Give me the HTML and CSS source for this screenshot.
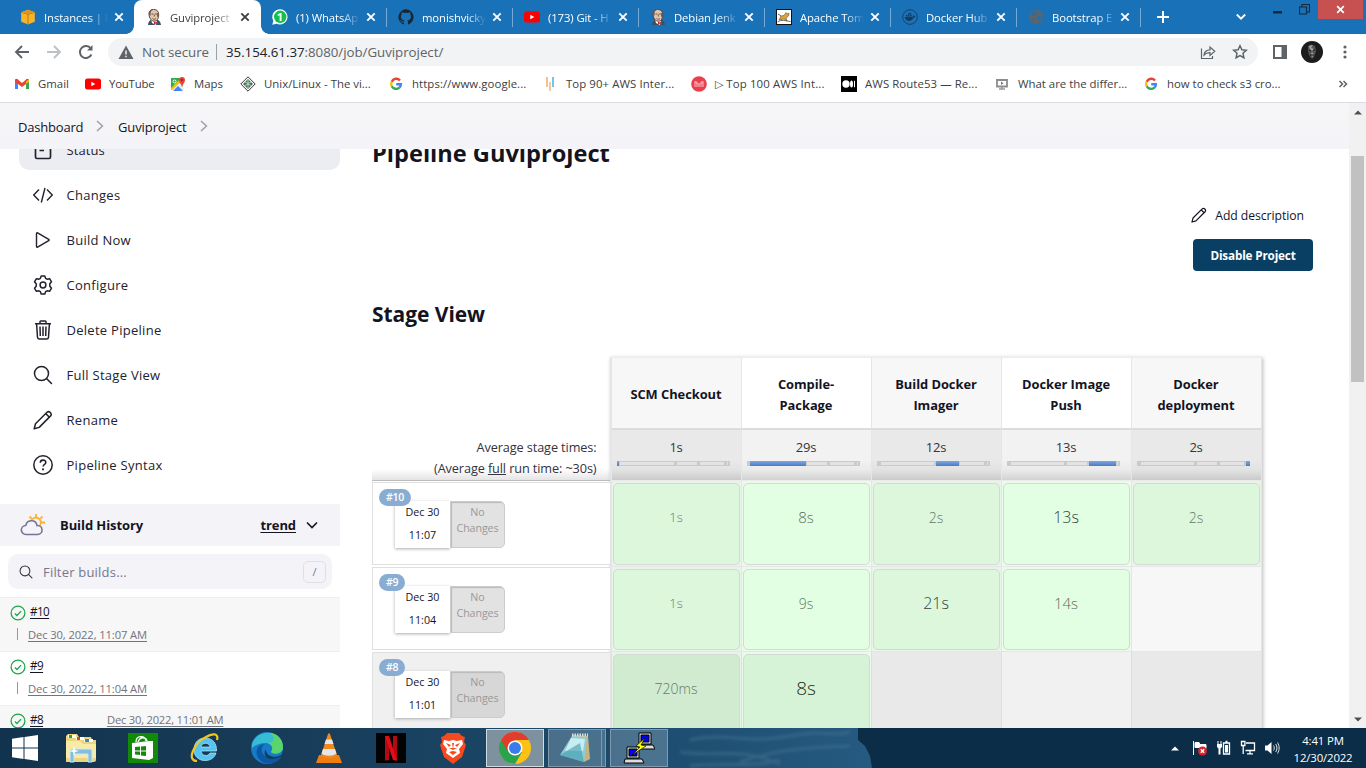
FILE: index.html
```html
<!DOCTYPE html>
<html lang="en">
<head>
<meta charset="utf-8">
<title>Guviproject [Jenkins]</title>
<link rel="stylesheet" href="styles.css">
</head>
<body>
<svg class="defs" aria-hidden="true">
  <symbol id="close" viewBox="0 0 10 10"><path d="M1.3 1.3l7.4 7.4M8.7 1.3L1.3 8.7" stroke="currentColor" stroke-width="1.9"/></symbol>
  <symbol id="jenkins" viewBox="0 0 16 16"><path d="M2 16c.3-3 1.500-4.500 3.500-5.500h5c2.500.6 4 2 4.500 5.500z" fill="#3d5064"/><path d="M5 10l1 4 4 2 1-5z" fill="#fff"/><path d="M3 5.500C2.600 2 5 .4 7.500.4c3.500 0 5.300 2 5.200 5.400-.1 3.800-1.700 6.600-4.500 6.400C5.200 12 3.300 9 3 5.500z" fill="#e3c6aa" stroke="#4b3b38" stroke-width=".9"/><path d="M3 6C2.300 2 5 .2 7.500.3L4.800 2.500 4.500 7zM12.500 4l-.2 5-1.300-2 .2-3z" fill="#71584f"/><path d="M5.500 5h2M9 5h2M6.500 9.500c1.300 1 2.500.9 3.500 0M8.300 5.500v2" stroke="#4b3b38" stroke-width=".8" fill="none"/><path d="M8 12.500l2 1 2-1v3l-2-1-2 1z" fill="#d4202f"/></symbol>
  <symbol id="youtube" viewBox="0 0 16 16"><rect x="0" y="2.500" width="16" height="11" rx="2.500" fill="#f00"/><path d="M6.300 5.700v4.600l4-2.300z" fill="#fff"/></symbol>
  <symbol id="google" viewBox="0 0 16 16"><g fill="none" stroke-width="2.400"><path d="M12 4.500A4.900 4.900 0 0 0 3.700 5.700" stroke="#ea4335"/><path d="M3.700 5.700a4.900 4.900 0 0 0 0 4.600" stroke="#fbbc05"/><path d="M3.700 10.300a4.900 4.900 0 0 0 7.600 1.300" stroke="#34a853"/><path d="M11.300 11.600a4.700 4.700 0 0 0 1.600-3.400H8.200" stroke="#4285f4"/></g></symbol>
  <symbol id="pencil" viewBox="0 0 20 20"><g fill="none" stroke="currentColor" stroke-width="1.500" stroke-linejoin="round"><path d="M1.200 18.800l1.300-5L14 2.300c2-2 5.500 1.400 3.600 3.600L6.200 17.400z"/><path d="M12.800 3.600l3.600 3.600"/></g></symbol>
  <symbol id="search" viewBox="0 0 20 20"><circle cx="8.500" cy="8.500" r="7" fill="none" stroke="currentColor" stroke-width="1.500"/><path d="M13.500 13.500l5 5" stroke="currentColor" stroke-width="1.500" stroke-linecap="round"/></symbol>
  <symbol id="chev" viewBox="0 0 10 14"><path d="M2 2l5.500 5L2 12" fill="none" stroke="currentColor" stroke-width="1.400"/></symbol>
  <symbol id="ok" viewBox="0 0 16 16"><circle cx="8" cy="8" r="6.900" fill="none" stroke="#1ea64b" stroke-width="1.300"/><path d="M4.900 8.500l2 2 4.200-4.400" fill="none" stroke="#1ea64b" stroke-width="1.300"/></symbol>
</svg>

<header class="tabstrip">
  <div class="tab"><svg class="fav" viewBox="0 0 16 16"><path d="M8 .8l6.800 2.400v9.600L8 15.400 1.200 12.800V3.200z" fill="#f5b42a"/><path d="M1.200 3.200L8 5.300l6.800-2.100M8 5.300v10" stroke="#a96b10" stroke-width=".8" fill="none"/><path d="M1.200 3.200L8 .8l6.800 2.400L8 5.300z" fill="#e0941d"/></svg><span>Instances | E</span><svg class="x"><use href="#close"/></svg></div>
  <div class="tab active"><svg class="fav"><use href="#jenkins"/></svg><span>Guviproject</span><svg class="x"><use href="#close"/></svg></div>
  <div class="tab sep"><svg class="fav" viewBox="0 0 16 16"><path d="M.3 15.700l1-4A7.600 7.600 0 1 1 4.500 14.700z" fill="#fff"/><circle cx="8.200" cy="7.800" r="6.200" fill="#12c04d"/><text x="8" y="12" text-anchor="middle" font-size="11" font-weight="700" fill="#fff">1</text></svg><span>(1) WhatsAp</span><svg class="x"><use href="#close"/></svg></div>
  <div class="tab sep"><svg class="fav" viewBox="0 0 16 16"><path d="M8 .3a7.800 7.800 0 0 0-2.500 15.100c.4 0 .5-.2.500-.4v-1.500c-2.200.5-2.700-1-2.700-1-.4-.9-.9-1.100-.9-1.100-.7-.5.100-.5.100-.5.800 0 1.200.8 1.200.8.700 1.200 1.900.9 2.300.7.100-.5.300-.9.500-1.100-1.700-.2-3.600-.9-3.600-3.900 0-.9.300-1.600.8-2.100-.1-.2-.4-1 .1-2.100 0 0 .7-.2 2.100.8a7.600 7.600 0 0 1 4 0c1.500-1 2.200-.8 2.200-.8.400 1.100.1 1.900.1 2.100.5.500.8 1.200.8 2.100 0 3-1.900 3.700-3.600 3.900.300.3.500.8.500 1.500V15c0 .2.100.5.600.4A7.800 7.800 0 0 0 8 .3z" fill="#1b2733"/></svg><span>monishvicky</span><svg class="x"><use href="#close"/></svg></div>
  <div class="tab sep"><svg class="fav"><use href="#youtube"/></svg><span>(173) Git - H</span><svg class="x"><use href="#close"/></svg></div>
  <div class="tab sep"><svg class="fav"><use href="#jenkins"/></svg><span>Debian Jenk</span><svg class="x"><use href="#close"/></svg></div>
  <div class="tab sep"><svg class="fav" viewBox="0 0 16 16"><rect x=".5" y=".5" width="15" height="15" fill="#fff" stroke="#111"/><path d="M3 11l2-4 3-.5 2-3 1 1.500 2-1-.5 3L10 9l1 3-3-2z" fill="#d5a546" stroke="#6e5218" stroke-width=".6"/><path d="M1.500 13c4-3 8-1 13-.5M2 5l3 2" stroke="#444" fill="none" stroke-width=".8"/></svg><span>Apache Tom</span><svg class="x"><use href="#close"/></svg></div>
  <div class="tab sep"><svg class="fav" viewBox="0 0 16 16"><circle cx="8" cy="8" r="7.300" fill="none" stroke="#1b4266" stroke-width="1"/><path d="M2.800 8h7.700c.6-.6.5-1.400 1-1.900.7.400.8.900.8 1.200.5-.1.900 0 1.200.2-.4.900-1.200 1.100-1.900 1.100-1.500 4.300-7.800 5-8.800-.6zM4 6h1.500v1.500H4zM6 6h1.500v1.500H6zM8 6h1.500v1.500H8zM6 4.200h3.500v1.400H6z" fill="#173b5c"/></svg><span>Docker Hub</span><svg class="x"><use href="#close"/></svg></div>
  <div class="tab sep last"><svg class="fav" viewBox="0 0 16 16"><circle cx="8" cy="8" r="7.200" fill="#5d646b"/><path d="M5 3l3-.5.5 1.500-2 1 .5 1.500-2 .5-1.500-1zM9.500 7.500l3-1 1 2-1.500 3-2-1zM4 9.500l2.500 1-.5 2.500-1.500-1z" fill="#1971b8"/></svg><span>Bootstrap E</span><svg class="x"><use href="#close"/></svg></div>
  <svg class="plus" viewBox="0 0 12 12"><path d="M6 0v12M0 6h12" stroke="#fff" stroke-width="2"/></svg>
  <svg class="tabmenu" viewBox="0 0 10 8"><path d="M.8 1.500L5 5.700l4.200-4.200" fill="none" stroke="#fff" stroke-width="1.800"/></svg>
  <div class="winctl">
    <svg width="9" height="3"><rect width="9" height="2.500" fill="#15293b"/></svg>
    <svg width="11" height="11" viewBox="0 0 11 11"><path d="M.5 3h7v7h-7zM3 3V.5h7.500V8H8" fill="none" stroke="#15293b" stroke-width="1.100"/></svg>
    <div class="winclose"><svg width="9" height="9"><use href="#close"/></svg></div>
  </div>
</header>

<div class="toolbar">
  <div class="nav">
    <svg viewBox="0 0 16 16"><path d="M15 8H2M8 2L2 8l6 6" fill="none" stroke="#5f6368" stroke-width="1.900"/></svg>
    <svg viewBox="0 0 16 16"><path d="M1 8h13M8 2l6 6-6 6" fill="none" stroke="#bdc1c6" stroke-width="1.900"/></svg>
    <svg viewBox="0 0 16 16"><path d="M13.400 10.500a6 6 0 1 1-.6-6" fill="none" stroke="#5f6368" stroke-width="2"/><path d="M14.500 1v5.500H9z" fill="#5f6368"/></svg>
  </div>
  <div class="omnibox">
    <svg class="warn" viewBox="0 0 16 14"><path d="M8 .5L15.500 14H.5z" fill="#5f6368"/><path d="M8 5.500v4M8 10.800v1.500" stroke="#f1f3f4" stroke-width="1.500"/></svg>
    <span class="insecure">Not secure</span><i class="bar"></i>
    <span class="url"><b>35.154.61.37</b>:8080/job/Guviproject/</span>
    <svg class="share" viewBox="0 0 16 16"><path d="M1.500 4.500v10h11v-2.500M4 11c.4-3.500 2.600-5 6-5.100V3l4.800 4.300L10 11.500V8.700C7.500 8.600 5.500 9.300 4 11z" fill="none" stroke="#5f6368" stroke-width="1.200"/></svg>
    <svg class="star" viewBox="0 0 16 16"><path d="M8 1.800l1.900 4 4.400.5-3.300 3 .9 4.400L8 11.500l-3.900 2.200.9-4.400-3.300-3 4.400-.5z" fill="none" stroke="#5f6368" stroke-width="1.500"/></svg>
  </div>
  <svg class="panel" viewBox="0 0 14 14"><path d="M1 1h12v12H1z" fill="none" stroke="#5f6368" stroke-width="2"/><path d="M8.500 1H13v12H8.500z" fill="#5f6368"/></svg>
  <svg class="avatar" viewBox="0 0 22 22"><circle cx="11" cy="11" r="11" fill="#1c1c1c"/><path d="M7 5l3-1.500L14 5l1 5-2 6-2 2-2.500-3L7 10z" fill="#555"/><path d="M8 5l4-1-2 3 3 1-2 2-2-2zM10 12l2-.5.5 3-1.500 2z" fill="#a5a5a5"/><path d="M8 9l2 1M12 9.500l2-1M9 14h4" stroke="#111"/></svg>
  <svg class="dots" viewBox="0 0 4 14"><g fill="#5f6368"><circle cx="2" cy="2" r="1.600"/><circle cx="2" cy="7" r="1.600"/><circle cx="2" cy="12" r="1.600"/></g></svg>
</div>

<nav class="bookmarks">
  <a class="b1"><svg viewBox="0 0 16 16"><path d="M1 3.500h3V13H1z" fill="#4285f4"/><path d="M12 3.500h3V13h-3z" fill="#34a853"/><path d="M1 3.500l2-.7L8 7l5-4.200 2 .7v2.200l-7 5.400-7-5.400z" fill="#ea4335"/><path d="M12 5.500l3-2.300v2.600L12 8z" fill="#fbbc04"/></svg><span>Gmail</span></a>
  <a class="b2"><svg><use href="#youtube"/></svg><span>YouTube</span></a>
  <a class="b3"><svg viewBox="0 0 16 16"><path d="M1 2h12v12H1z" fill="#34a853"/><path d="M1 14L11 5l3 9z" fill="#e8eaed"/><path d="M3 15l5-5 5 5z" fill="#4285f4"/><path d="M1 12l9-9 1.500 2L2 14H1z" fill="#fbbc04"/><circle cx="4.500" cy="5.500" r="1.500" fill="none" stroke="#fff"/><path d="M12 11C11.500 8 9 7 9 4a3 3 0 0 1 6 0c0 3-2.500 4-3 7z" fill="#ea4335"/><circle cx="12" cy="4" r="1.100" fill="#8d1f17"/></svg><span>Maps</span></a>
  <a class="b4"><svg viewBox="0 0 16 16"><path d="M8 .8L15.200 8 8 15.200.8 8z" fill="#fff" stroke="#333"/><path d="M8 3l5 5-5 5-5-5z" fill="#56635b"/><path d="M5 6l3 1.500L11 6M5 9.500L8 8l3 1.500M8 4v8" stroke="#a4e5bd" fill="none"/></svg><span>Unix/Linux - The vi...</span></a>
  <a class="b5"><svg><use href="#google"/></svg><span>https://www.google...</span></a>
  <a class="b6"><svg viewBox="0 0 16 16"><path d="M5 1v10" stroke="#f5ad62" stroke-width="1.500"/><path d="M8 6v9" stroke="#f6c99c" stroke-width="2"/><path d="M11 1v10" stroke="#3cb6e3" stroke-width="1.500"/></svg><span>Top 90+ AWS Inter...</span></a>
  <a class="b7"><svg viewBox="0 0 16 16"><circle cx="8" cy="8" r="7.800" fill="#e8404f"/><path d="M4 11V5.500l2 2.500V11m2-3v3m2 0V8l2-2.500V11M4.500 5L8 8.500 11.500 5" stroke="#ffc1c5" fill="none"/></svg><span>▷ Top 100 AWS Int...</span></a>
  <a class="b8"><svg viewBox="0 0 16 16"><path d="M0 0h16v16H0z"/><circle cx="5" cy="8" r="3.700" fill="#fff"/><ellipse cx="10.500" cy="8" rx="1.500" ry="3.500" fill="#fff"/><path d="M13.500 4.800v6.400" stroke="#fff"/></svg><span>AWS Route53 — Re...</span></a>
  <a class="b9"><svg viewBox="0 0 16 16"><path d="M3 4h10v6.500H3z" fill="#fff" stroke="#8c8c8c" stroke-width="1.800"/><path d="M7 5.500v3.500l2.500-1.700z" fill="#777"/><path d="M5 13h6M8 11v2" stroke="#999" stroke-width="1.500"/></svg><span>What are the differ...</span></a>
  <a class="b10"><svg><use href="#google"/></svg><span>how to check s3 cro...</span></a>
  <svg class="more" viewBox="0 0 10 8"><path d="M1.500 1l3 3-3 3M5.500 1l3 3-3 3" fill="none" stroke="#5f6368" stroke-width="1.500"/></svg>
</nav>

<div class="page">
  <div class="view">
    <div class="crumbs"><span class="c1">Dashboard</span><svg><use href="#chev"/></svg><span class="c2">Guviproject</span><svg><use href="#chev"/></svg></div>
    <div class="clip"><div class="cols">
      <aside class="side">
        <a class="task on"><svg viewBox="0 0 20 20"><path d="M2.500 2h15v15c0 1-.6 1.500-1.500 1.500H4c-.900 0-1.500-.5-1.500-1.500zM6.500 10.500H11M6.500 6H13" fill="none" stroke="currentColor" stroke-width="1.700"/></svg>Status</a>
        <a class="task"><svg viewBox="0 0 20 20"><path d="M6 4.500L.7 10 6 15.500M14 4.500l5.300 5.500-5.300 5.500M12 3L8.300 17.500" fill="none" stroke="currentColor" stroke-width="1.400"/></svg>Changes</a>
        <a class="task"><svg viewBox="0 0 20 20"><path d="M3.500 3.400v13.200c0 .6.600.9 1.100.6L15.700 10.600c.5-.3.500-.9 0-1.200L4.600 2.800c-.5-.3-1.100 0-1.100.6z" fill="none" stroke="currentColor" stroke-width="1.400"/></svg>Build Now</a>
        <a class="task"><svg viewBox="0 0 20 20"><circle cx="10" cy="10" r="2.900" fill="none" stroke="currentColor" stroke-width="1.500"/><path d="M8.200.9h3.600l.8 2.400 1.500.9 2.500-.5 1.900 3.100-1.700 2v2.400l1.700 2-1.900 3.100-2.500-.5-1.500.9-.8 2.400H8.200l-.8-2.400-1.500-.9-2.500.5-1.900-3.100 1.700-2V8.800L1.500 6.800l1.900-3.100 2.500.5 1.500-.9z" fill="none" stroke="currentColor" stroke-width="1.500" stroke-linejoin="round"/></svg>Configure</a>
        <a class="task"><svg viewBox="0 0 20 20"><path d="M2 3.700h16M7 3.500V1.800c0-.5.300-.8.800-.8h4.400c.5 0 .8.300.8.800v1.700M3.600 4l.9 13.300c0 1 .7 1.700 1.700 1.700h7.600c1 0 1.700-.7 1.700-1.700L16.400 4M7 6.500l.3 9.500M10 6.500V16M13 6.500l-.3 9.500" fill="none" stroke="currentColor" stroke-width="1.500"/></svg>Delete Pipeline</a>
        <a class="task"><svg><use href="#search"/></svg>Full Stage View</a>
        <a class="task"><svg><use href="#pencil"/></svg>Rename</a>
        <a class="task"><svg viewBox="0 0 20 20"><circle cx="10" cy="10" r="9.200" fill="none" stroke="currentColor" stroke-width="1.500"/><path d="M7.300 7.700C7.300 4.200 12.800 4.400 12.800 7.400c0 2-2.700 2-2.700 4.200" fill="none" stroke="currentColor" stroke-width="1.600"/><circle cx="10" cy="14.300" r="1.100" fill="currentColor"/></svg>Pipeline Syntax</a>
        <div class="bh"><svg class="cloud" viewBox="0 0 26 24"><path d="M11 8.500a5 5 0 1 1 8.500 4.500M16 1v3M9.500 3.500l2 2M22.500 3.500l-2 2M21.500 9.500h3.500" fill="none" stroke="#fcb32c" stroke-width="1.800"/><path d="M6 21.500a4.500 4.500 0 0 1-.3-9C6.500 9 9 7.800 11.500 7.800c3 0 5 1.700 5.500 4.700a4.500 4.500 0 0 1 1 9z" fill="#f3f3f8" stroke="#757398" stroke-width="1.600"/></svg><b>Build History</b><b class="trend">trend</b><svg class="down" viewBox="0 0 12 8"><path d="M1 1.500l5 5 5-5" fill="none" stroke="currentColor" stroke-width="1.600"/></svg></div>
        <div class="filter"><svg><use href="#search"/></svg><span>Filter builds...</span><kbd>/</kbd></div>
        <div class="build alt"><svg><use href="#ok"/></svg><u class="no">#10</u><div class="when"><i></i><u>Dec 30, 2022, 11:07 AM</u></div></div>
        <div class="build"><svg><use href="#ok"/></svg><u class="no">#9</u><div class="when"><i></i><u>Dec 30, 2022, 11:04 AM</u></div></div>
        <div class="build alt"><svg><use href="#ok"/></svg><u class="no">#8</u><u class="inline">Dec 30, 2022, 11:01 AM</u></div>
      </aside>
      <main class="main">
        <h1>Pipeline Guviproject</h1>
        <div class="actions"><a><svg><use href="#pencil"/></svg><span>Add description</span></a><button>Disable Project</button></div>
        <h2>Stage View</h2>
        <div class="stages">
          <div class="legend"><div>Average stage times:</div><div>(Average <u>full</u> run time: ~30s)</div></div>
          <div class="runs">
            <div class="run"><span class="badge">#10</span><div class="date"><div>Dec 30</div><div>11:07</div></div><div class="chg">No<br>Changes</div></div>
            <div class="run"><span class="badge">#9</span><div class="date"><div>Dec 30</div><div>11:04</div></div><div class="chg">No<br>Changes</div></div>
            <div class="run old"><span class="badge">#8</span><div class="date"><div>Dec 30</div><div>11:01</div></div><div class="chg">No<br>Changes</div></div>
          </div>
          <div class="grid">
            <div class="th odd">SCM Checkout</div><div class="th">Compile-<br>Package</div><div class="th odd">Build Docker<br>Imager</div><div class="th">Docker Image<br>Push</div><div class="th odd">Docker<br>deployment</div>
            <div class="avg odd">1s<div class="track"><i style="width:2px"></i><s style="width:57px"></s><s style="width:23px"></s><s style="width:27px"></s><s style="width:4px"></s></div></div>
            <div class="avg">29s<div class="track"><s style="width:2px"></s><i style="width:57px"></i><s style="width:23px"></s><s style="width:27px"></s><s style="width:4px"></s></div></div>
            <div class="avg odd">12s<div class="track"><s style="width:2px"></s><s style="width:57px"></s><i style="width:23px"></i><s style="width:27px"></s><s style="width:4px"></s></div></div>
            <div class="avg">13s<div class="track"><s style="width:2px"></s><s style="width:57px"></s><s style="width:23px"></s><i style="width:27px"></i><s style="width:4px"></s></div></div>
            <div class="avg odd">2s<div class="track"><s style="width:2px"></s><s style="width:57px"></s><s style="width:23px"></s><s style="width:27px"></s><i style="width:4px"></i></div></div>
            <div class="cell odd ok"><div class="t1">1s</div></div><div class="cell ok"><div class="t2">8s</div></div><div class="cell odd ok"><div class="t1b">2s</div></div><div class="cell ok"><div class="t3">13s</div></div><div class="cell odd ok"><div class="t1b">2s</div></div>
            <div class="cell odd ok"><div class="t1">1s</div></div><div class="cell ok"><div class="t1b">9s</div></div><div class="cell odd ok"><div class="t3">21s</div></div><div class="cell ok"><div class="t2">14s</div></div><div class="cell odd"></div>
            <div class="cell odd ok dim"><div class="t1b">720ms</div></div><div class="cell ok dim"><div class="t4">8s</div></div><div class="cell odd dim"></div><div class="cell dim"></div><div class="cell odd dim"></div>
          </div>
        </div>
      </main>
    </div></div>
  </div>
  <div class="scroll"><svg viewBox="0 0 8 5"><path d="M0 4.500L4 .5l4 4z" fill="#505050"/></svg><div class="thumb"></div><svg class="dn" viewBox="0 0 8 5"><path d="M0 .5l4 4 4-4z" fill="#505050"/></svg></div>
</div>

<footer class="taskbar">
  <svg class="texture" viewBox="0 0 873 40" preserveAspectRatio="none"><defs><linearGradient id="tb"><stop offset="0" stop-color="#12334d"/><stop offset=".35" stop-color="#183d5a"/><stop offset=".7" stop-color="#1b4a6c"/><stop offset="1" stop-color="#265a80"/></linearGradient><filter id="soft"><feGaussianBlur stdDeviation="1.500"/></filter></defs><path d="M0 0h858v12l7 6 5 10 2 12H0z" fill="url(#tb)"/><g fill="none" stroke="#4a7896" stroke-opacity=".45" stroke-width="3" filter="url(#soft)"><path d="M690 12c30-8 60 4 100-4s40 2 60-4M740 34c30-10 50-14 110-16M680 24c40 6 60-6 100 12M690 38c40-4 60 2 90-6"/></g></svg>
  <div class="apps">
    <svg class="a-start" viewBox="0 0 26 26"><path d="M0 3.700L11.500 2v10.500H0zM12.500 1.900L26 0v12.500H12.500zM0 13.500h11.500V24L0 22.300zM12.500 13.500H26V26l-13.500-1.900z" fill="#fff"/></svg>
    <svg class="a-exp" viewBox="0 0 32 30"><path d="M1 3l2-2h9l2 3h12l1 3h4v20c0 1-1 2-2 2H1z" fill="#ecd37e"/><path d="M3 2h8v3H3z" fill="#fff"/><path d="M4 2h3v3H4z" fill="#2ba52b"/><path d="M11 4h8v3h-8z" fill="#fff"/><path d="M12 4h3v3h-3z" fill="#d6422b"/><path d="M19 6h9v3h-9z" fill="#fff"/><path d="M20 6h4v3h-4z" fill="#2c8fd6"/><path d="M1 8h14l3 3h13v14H1z" fill="#f9eaa6"/><path d="M5 29V18c0-1 1-2 2-2h18c1 0 2 1 2 2v11h-4v-8H9v8z" fill="#83bedd" stroke="#c9e9f7"/><path d="M9 13l1 4 4 1-4 1-1 4-1-4-4-1 4-1z" fill="#fff"/></svg>
    <svg class="a-store" viewBox="0 0 30 30"><path d="M0 0h30v30H0z" fill="#118a08"/><path d="M4 10l17-2 4 0v17l-4 2-17-2z" fill="#fff"/><path d="M8 9c0-7 9-7 10-1M10 9c2-6 8-5 9-1" fill="none" stroke="#fff" stroke-width="1.300"/><path d="M7 14l5-.5v4H7zM13 13.400l5-.4v4.500h-5zM7 18.500h5V22l-5-.4zM13 18.500h5V23l-5-.6z" fill="#118a08"/></svg>
    <svg class="a-ie" viewBox="0 0 30 30"><path d="M4 17C4 9 9 5 15 5c8 0 12 6 11.500 13H11c.5 5 7 6 9 2h6C23 31 4 30 4 17zm7-3h9c-.5-5-8.500-5-9 0z" fill="#55c4f0" stroke="#bceafc" stroke-width=".7"/><path d="M7 28C-4 28 4 10 16 4c6-4 13-4 11 3" fill="none" stroke="#f3c51f" stroke-width="2.200"/></svg>
    <svg class="a-edge" viewBox="0 0 32 32"><circle cx="16" cy="16" r="16" fill="#167cc9"/><path d="M1 12C6-4 31-3 32 15c0 7-9 8-12 5 3-4 0-9-6-9-5 0-10 2-13 5z" fill="#36bdd3"/><path d="M18 1c9 0 14 7 14 14 0 7-9 8-12 5 3-4 1-8-3-9C24 11 25 4 18 1z" fill="#5bd46b"/><path d="M14 12c-7 5-3 17 14 14l3-2c-5 9-18 10-23 3-5-6-2-15 6-15z" fill="#0d57a5"/><path d="M15 17c-1 7 9 10 15 6l1 1c-3 2-7 3-10 3-7 0-9-6-6-10z" fill="#123c5b"/></svg>
    <svg class="a-vlc" viewBox="0 0 26 30"><path d="M3 22h20l3 8H0z" fill="#ee7d12"/><path d="M12 1c.5-1 1.500-1 2 0l7 21c-3 4-13 4-16 0z" fill="#f08a20"/><path d="M10 6.500h6l1.500 4.500h-9zM7 16h12l1.500 4.500c-4 3-11 3-15 0z" fill="#e6e6e6"/></svg>
    <svg class="a-nf" viewBox="0 0 30 30"><path d="M0 0h30v30H0z" fill="#030303"/><path d="M9 3h4v24l-4 .5zM17 3h4v24.500l-4-.5z" fill="#b50913"/><path d="M9 3h4l8 24.500-4-.5z" fill="#e50b18"/></svg>
    <svg class="a-brave" viewBox="0 0 26 32"><path d="M7 1h12l3 3 3 1-1 5 2 3-4 12-9 7-9-7L0 13l2-3-1-5 3-1z" fill="#f8481e"/><path d="M4 8l5 1 4-1 4 1 5-1 1 4-4 5 1 4-7 5-7-5 1-4-4-5z" fill="#fff"/><path d="M6 11l5 2-2 2zM20 11l-5 2 2 2zM12 11l1 6 1-6zM9 20l4 3 4-3-4-1zM9 16l4 2 4-2" fill="#f8481e"/></svg>
    <div class="slot lit"><svg width="32" height="32" viewBox="0 0 32 32"><circle cx="16" cy="16" r="16" fill="#fbc116"/><path d="M16 16L2.100 8A16 16 0 0 0 16 32l7-12z" fill="#2ba24c"/><path d="M2.100 8a16 16 0 0 1 27.800 0H16L9 20z" fill="#e33b2e"/><circle cx="16" cy="16" r="7.500" fill="#fff"/><circle cx="16" cy="16" r="6" fill="#3a7bea"/></svg></div>
    <div class="slot pad"><svg width="32" height="30" viewBox="0 0 32 30"><path d="M13 2l16 1 2 23-6 3z" fill="#c4b580"/><path d="M13 3l15 1-3 25L1 22z" fill="#8dcdda"/><path d="M12 5l14 1-2 12L6 18z" fill="#c8edf1"/><path d="M1 22l20-12 4 19z" fill="#3f9bae" fill-opacity=".6"/><path d="M13 2h16" stroke="#ddd" stroke-width="3" stroke-dasharray="1.500 1"/></svg></div><div class="slot stack"></div>
    <div class="slot"><svg width="32" height="32" viewBox="0 0 32 32"><g stroke="#000"><path d="M16 1h12v11H16z" fill="#ddd"/><path d="M18 3h8v7h-8z" fill="#00e"/><path d="M14 13h16l2 4H15z" fill="#ddd"/><path d="M4 15h12v11H4z" fill="#ddd"/><path d="M6 17h8v7H6z" fill="#00e"/><path d="M2 27h17l2 4H1z" fill="#ddd"/><path d="M22 6l-9 8 4 1-8 8 14-9-5-1z" fill="#ff0" stroke-width=".6"/></g></svg></div>
  </div>
  <div class="tray">
    <svg width="8" height="5" viewBox="0 0 8 5"><path d="M0 4.500L4 .5l4 4z" fill="#fff"/></svg>
    <svg width="16" height="16" viewBox="0 0 16 16"><path d="M1.500 1v14M3 2.500h4l1 2h6v4H8l-1-1H3z" fill="#fff" stroke="#fff"/><circle cx="10.500" cy="11" r="4.500" fill="#d9232b"/><path d="M8.800 9.300l3.400 3.400M12.200 9.300l-3.400 3.400" stroke="#fff" stroke-width="1.500"/></svg>
    <svg width="16" height="16" viewBox="0 0 16 16"><path d="M7.500 3h6v11h-6zM9.500 1.500h2" fill="none" stroke="#fff" stroke-width="1.300"/><path d="M9 5h3v7.500H9zM1 4h5v3l-1.500 1.500v6h-2v-6L1 7zM1.500 1h1v3h-1zM4.500 1h1v3h-1z" fill="#fff"/></svg>
    <svg width="16" height="16" viewBox="0 0 16 16"><path d="M6 3h8.500v7.500H5.500M10 11v2.500M7 13.800h6M3.200 6v8M1.500 1.500h3.400v4H1.500z" fill="none" stroke="#fff" stroke-width="1.300"/></svg>
    <svg width="16" height="16" viewBox="0 0 16 16"><path d="M1 5.500h2.500L7.500 2v12L3.500 10.500H1z" fill="#fff"/><path d="M9.500 5.500c1 1.500 1 3.500 0 5M11.700 4c1.700 2.500 1.700 5.500 0 8M13.500 2.500c2.200 3.500 2.200 7.500 0 11" fill="none" stroke="#dce5ea" stroke-width="1"/></svg>
    <div class="clock"><div>4:41 PM</div><div>12/30/2022</div></div>
  </div>
</footer>
</body>
</html>
```

FILE: styles.css
```css
* { box-sizing: border-box; }
body { margin: 0; width: 1366px; height: 768px; overflow: hidden; display: flex; flex-direction: column; background: #fff; font-family: "Open Sans", "Noto Sans", sans-serif; color: #14141f; }
svg { display: block; flex: none; }
.defs { width: 0; height: 0; position: absolute; }

.tabstrip { height: 34px; flex: none; display: flex; align-items: center; background: #1971b8; padding-left: 8px; }
.tab { width: 126px; height: 34px; display: flex; align-items: center; padding-left: 12px; color: #fff; position: relative; }
.tab.sep:not(:nth-child(3))::before { content: ""; position: absolute; left: 0; top: 8px; width: 1px; height: 19px; background: #75aad6; }
.tab.last { width: 125px; border: 0; }
.tab.last::after { content: ""; position: absolute; right: 0; top: 8px; width: 1px; height: 19px; background: #75aad6; }
.tab span { width: 69px; margin-left: 8px; font-size: 11.3px; letter-spacing: -.1px; font-weight: 500; white-space: nowrap; -webkit-mask-image: linear-gradient(90deg, #000 65%, transparent 93%); mask-image: linear-gradient(90deg, #000 65%, transparent 93%); }
.tab .fav { width: 16px; height: 16px; }
.tab .x { width: 10px; height: 10px; margin-left: 1px; }
.tab.active { background: #fff; color: #3c4043; border-radius: 8px 8px 0 0; width: 127px; margin-right: -1px; z-index: 1; }
.tab.active::before, .tab.active::after { content: ""; position: absolute; bottom: 0; width: 8px; height: 8px; }
.tab.active::before { left: -8px; background: radial-gradient(circle at 0 0, transparent 7.5px, #fff 8px); }
.tab.active::after { right: -8px; background: radial-gradient(circle at 100% 0, transparent 7.5px, #fff 8px); }
.tab.last .x { margin-left: -1px; }
.plus { width: 12px; height: 12px; margin-left: 16px; }
.tabmenu { width: 10px; height: 8px; margin-left: 67px; }
.winctl { margin-left: auto; align-self: flex-start; display: flex; color: #fff; }
.winctl > svg:first-child { margin-top: 11px; margin-right: 17px; }
.winctl > svg:nth-child(2) { margin-top: 4px; margin-right: 8px; }
.winclose { width: 45px; height: 19px; background: #c75050; display: flex; align-items: center; justify-content: center; margin-right: 3px; }

.toolbar { height: 36px; flex: none; display: flex; align-items: center; padding-left: 14px; }
.nav { display: flex; gap: 16px; width: 94px; }
.nav svg { width: 16px; height: 16px; }
.omnibox { width: 1150px; height: 28px; background: #f1f3f4; border-radius: 14px; display: flex; align-items: center; padding-left: 10px; font-size: 13.3px; color: #5f6368; }
.warn { width: 16px; height: 14px; }
.insecure { margin-left: 8px; width: 68px; white-space: nowrap; letter-spacing: -.05px; }
.bar { width: 1px; height: 16px; background: #9aa0a6; margin: 0 9px 0 6px; }
.url { white-space: nowrap; letter-spacing: -.03px; }
.url b { font-weight: 400; color: #202124; }
.share { width: 16px; height: 16px; margin-left: auto; }
.star { width: 16px; height: 16px; margin: 0 10px 0 16px; }
.panel { width: 14px; height: 14px; margin-left: 15px; }
.avatar { width: 22px; height: 22px; margin-left: 14px; }
.dots { width: 4px; height: 14px; margin-left: 20px; }

.bookmarks { height: 33px; flex: none; border-bottom: 1px solid #d9dbde; display: flex; align-items: center; padding: 0 0 5px 14px; font-size: 11.4px; color: #3c4043; }
.bookmarks a { display: flex; align-items: center; white-space: nowrap; }
.bookmarks a svg { width: 16px; height: 16px; margin-right: 8px; }
.bookmarks a span { margin-top: -1px; }
.b1 { width: 71px; } .b2 { width: 85px; } .b3 { width: 70px; } .b4 { width: 148px; } .b5 { width: 154px; } .b6 { width: 149px; } .b7 { width: 150px; } .b8 { width: 153px; } .b9 { width: 149px; } .b10 { width: 195px; }
.b2 span { letter-spacing: -.2px; } .b5 span, .b6 span, .b8 span { letter-spacing: .08px; } .b7 span { letter-spacing: .15px; }
.more { width: 10px; height: 8px; }

.page { height: 625px; flex: none; display: flex; }
.view { width: 1349px; display: flex; flex-direction: column; }
.crumbs { height: 46px; flex: none; background: linear-gradient(#f6f6f8, #f4f4f8); display: flex; align-items: center; padding: 2px 0 0 18px; font-size: 13px; }
.crumbs svg { width: 10px; height: 14px; color: #9c9cab; margin: -2px 13px 0 12px; }
.c1 { width: 65px; letter-spacing: -.2px; } .c2 { width: 69px; letter-spacing: -.1px; }
.clip { flex: 1; min-height: 0; overflow: hidden; }
.cols { display: flex; margin-top: -19px; }

.side { width: 340px; flex: none; }
.task { height: 40px; margin: 0 0 5px 19px; border-radius: 10px; display: flex; align-items: center; padding-left: 14px; font-size: 13px; letter-spacing: .28px; color: #22222e; }
.task.on { background: #ecedf3; letter-spacing: .1px; }
.task svg { width: 20px; height: 20px; margin-right: 13.500px; }
.bh { height: 42px; margin-top: 19px; background: #f3f3f8; display: flex; align-items: center; padding: 0 0 1px 20px; font-size: 13px; letter-spacing: -.08px; }
.cloud { width: 26px; height: 24px; margin-right: 14px; }
.trend { margin-left: auto; text-decoration: underline; text-underline-offset: 2px; }
.down { width: 12px; height: 8px; margin: 0 22px 0 10px; }
.filter { height: 35px; margin: 8px; border-radius: 10px; background: #f3f3f8; display: flex; align-items: center; padding: 0 6px 0 11px; font-size: 13px; font-weight: 500; letter-spacing: .2px; color: #77778e; }
.filter svg { width: 14px; height: 14px; color: #333342; margin-right: 10px; }
.filter kbd { margin-left: auto; width: 23px; height: 22px; border: 1px solid #dfdfe8; border-radius: 5px; font: 11px/19px "Open Sans", sans-serif; text-align: center; }
.build { height: 54px; display: flex; flex-wrap: wrap; align-content: flex-start; align-items: center; border-top: 1px solid #eee; padding: 3px 0 0 10px; font-size: 11.700px; }
.build.alt { background: #f7f7f7; }
.build u { text-underline-offset: 2px; }
.build svg { width: 16px; height: 16px; margin: 4px 4px 0 0; }
.no { line-height: 20px; width: 77px; letter-spacing: -.6px; }
.when { width: 100%; display: flex; align-items: center; gap: 10px; height: 22px; margin-top: 2px; color: #73737c; font-size: 11.200px; letter-spacing: -.1px; }
.when i { width: 1px; height: 12px; background: #999; margin-left: 7px; }
.inline { color: #73737c; font-size: 11.200px; letter-spacing: -.22px; }

.main { width: 1009px; padding-left: 32px; }
h1 { margin: 7px 0 0; font-size: 23.600px; line-height: 32px; font-weight: 700; letter-spacing: 0; }
.actions { display: flex; flex-direction: column; align-items: flex-end; padding-right: 36px; margin-top: 35px; font-size: 12.200px; }
.actions a { display: flex; align-items: center; height: 22px; margin-right: 9px; }
.actions svg { width: 16px; height: 16px; margin-right: 8px; }
.actions a span { letter-spacing: -.05px; }
.actions button { width: 120px; height: 32px; margin-top: 13px; border: 0; border-radius: 4px; background: #093f63; color: #fff; font: 700 11.700px "Open Sans", sans-serif; letter-spacing: -.15px; padding: 0; }
h2 { margin: 27px 0 0; font-size: 21px; line-height: 32px; letter-spacing: -.05px; }
.stages { margin-top: 27px; display: grid; grid-template: 124px 260px / 237.500px 652px; }
.legend { padding: 80px 13px 0 0; text-align: right; font-size: 12.700px; line-height: 21px; background: linear-gradient(transparent 112px, #e4e4e4); color: #333340; border-bottom: 1px solid #bbb; letter-spacing: -.1px; }
.grid { grid-column: 2; grid-row: 1 / 3; display: grid; grid-template-columns: repeat(5, 130px); grid-template-rows: 71px 53px 86px 85px 90px; width: 652px; border: 1px solid #e4e4e8; border-width: 0 1px; box-shadow: 1px 1px 4px #bbb; }
.runs { grid-row: 2; grid-column: 1; padding-top: 1px; }
.run { height: 83px; margin-bottom: 2px; border: 1px solid #dfdfdf; border-right: 0; display: flex; padding: 18px 0 0 22px; position: relative; background: #fff; font-size: 10.700px; text-align: center; }
.run.old { background: #f0f0f0; }
.badge { position: absolute; left: 6px; top: 6px; height: 17px; border-radius: 9px; background: #89add2; color: #fff; font: 600 10.500px/17px "Open Sans", sans-serif; letter-spacing: -.3px; padding: 0 7px; }
.date { width: 55px; height: 47px; background: #fff; line-height: 23px; box-shadow: 0 1px 3px #aaa; }
.chg { width: 55px; height: 47px; background: #e2e2e2; border: 1px solid #ccc; border-radius: 0 5px 5px 0; color: #999; line-height: 16px; padding-top: 2px; box-shadow: inset 1px 1px 1px #bbb; letter-spacing: -.1px; }
.old .chg { background: #d7d7d7; }
.th, .avg, .cell { border-left: 1px solid #e6e6e8; }
.th { border-top: 1px solid #ededf3; display: flex; align-items: center; justify-content: center; text-align: center; font-size: 12.900px; font-weight: 700; line-height: 21px; background: #fff; letter-spacing: -.05px; padding-top: 3px; }
.th.odd { background: #f7f7f7; }
.avg { border-top: 2px solid #dcdcdc; background: linear-gradient(#f2f2f2 60%, #eaeaea 80%, #d2d2d2); text-align: center; font-size: 13px; line-height: 20px; padding: 7px 5px 0; letter-spacing: -.2px; color: #333340; border-bottom: 1px solid #ebebeb; }
.avg.odd { background: linear-gradient(#e9e9e9 60%, #e2e2e2 80%, #cacaca); }
.track { width: 113px; height: 5px; margin: 4px 0 0 .5px; display: flex; background: #e3e3e3; }
.track s { height: 5px; border: 1px solid #cacaca; border-right-width: 2px; }
.track i { height: 5px; background: linear-gradient(#81a6df, #4a7bc8); }
.cell { background: #fff; padding: 2px 1px 1px; border-bottom: 1px solid #e6e6e8; font-weight: 300; text-align: center; }
.cell.odd { background: #f7f7f7; }
.cell.dim { background: #f1f1f1; border-color: #dedede; }
.cell.dim.odd { background: #e9e9e9; }
.cell > div { height: 100%; border: 1px solid #d3d9d3; border-radius: 5px; background: #e3ffe3; color: #5b6b5e; line-height: 67px; }
.cell.ok { background: #ecfaec; }
.cell.ok.odd { background: #e8f4e8; }
.cell.odd > div { background: #dcf7dc; }
.cell.dim > div { background: #d7f3d7; }
.cell.dim.odd > div { background: #d0ebd0; }
.cell > .t1 { font-size: 13px; color: #6c7d6f; }
.cell > .t1b { font-size: 14px; color: #67786a; }
.cell > .t2 { font-size: 15px; }
.cell > .t3 { font-size: 16px; color: #35443a; }
.cell > .t4 { font-size: 19px; color: #1e2a22; }

.scroll { width: 17px; background: #f1f1f1; display: flex; flex-direction: column; align-items: center; padding: 7px 0 6px 0; }
.scroll svg { width: 8px; height: 5px; }
.thumb { width: 13px; height: 226px; margin-top: 41px; background: #c1c1c1; }
.scroll .dn { margin-top: auto; }

.taskbar { height: 40px; flex: none; display: flex; background: #0b2d47; position: relative; }
.texture { position: absolute; left: 0; top: 0; width: 873px; height: 40px; }
.apps { display: flex; align-items: center; padding-left: 12px; position: relative; }
.a-start { width: 26px; height: 26px; }
.a-exp { width: 32px; height: 30px; margin-left: 27px; }
.a-store { width: 30px; height: 30px; margin-left: 31px; }
.a-ie { width: 30px; height: 30px; margin-left: 32px; }
.a-edge { width: 32px; height: 32px; margin-left: 31px; }
.a-vlc { width: 26px; height: 30px; margin-left: 33px; }
.a-nf { width: 30px; height: 30px; margin-left: 34px; }
.a-brave { width: 26px; height: 32px; margin: 0 20px 0 34px; }
.slot { width: 58px; height: 38px; border: 1px solid #8199aa; background: rgba(150,175,195,.38); display: flex; align-items: center; justify-content: center; }
.slot.lit { background: #7d919f; border-color: #d0dae1; }
.slot.pad { width: 54px; margin-left: 4px; }
.slot.stack { width: 4px; margin-right: 4px; border-left: 0; }
.tray { margin-left: auto; display: flex; align-items: center; position: relative; }
.tray > svg:first-child { margin-right: 13px; }
.tray > svg:not(:first-child) { margin-right: 8px; }
.clock { width: 76px; text-align: center; color: #fff; font-size: 11.400px; line-height: 17px; padding-top: 2px; margin-left: -3px; margin-right: 5px; letter-spacing: -.15px; }
.tray > svg:first-child { margin-left: 0; }
```
